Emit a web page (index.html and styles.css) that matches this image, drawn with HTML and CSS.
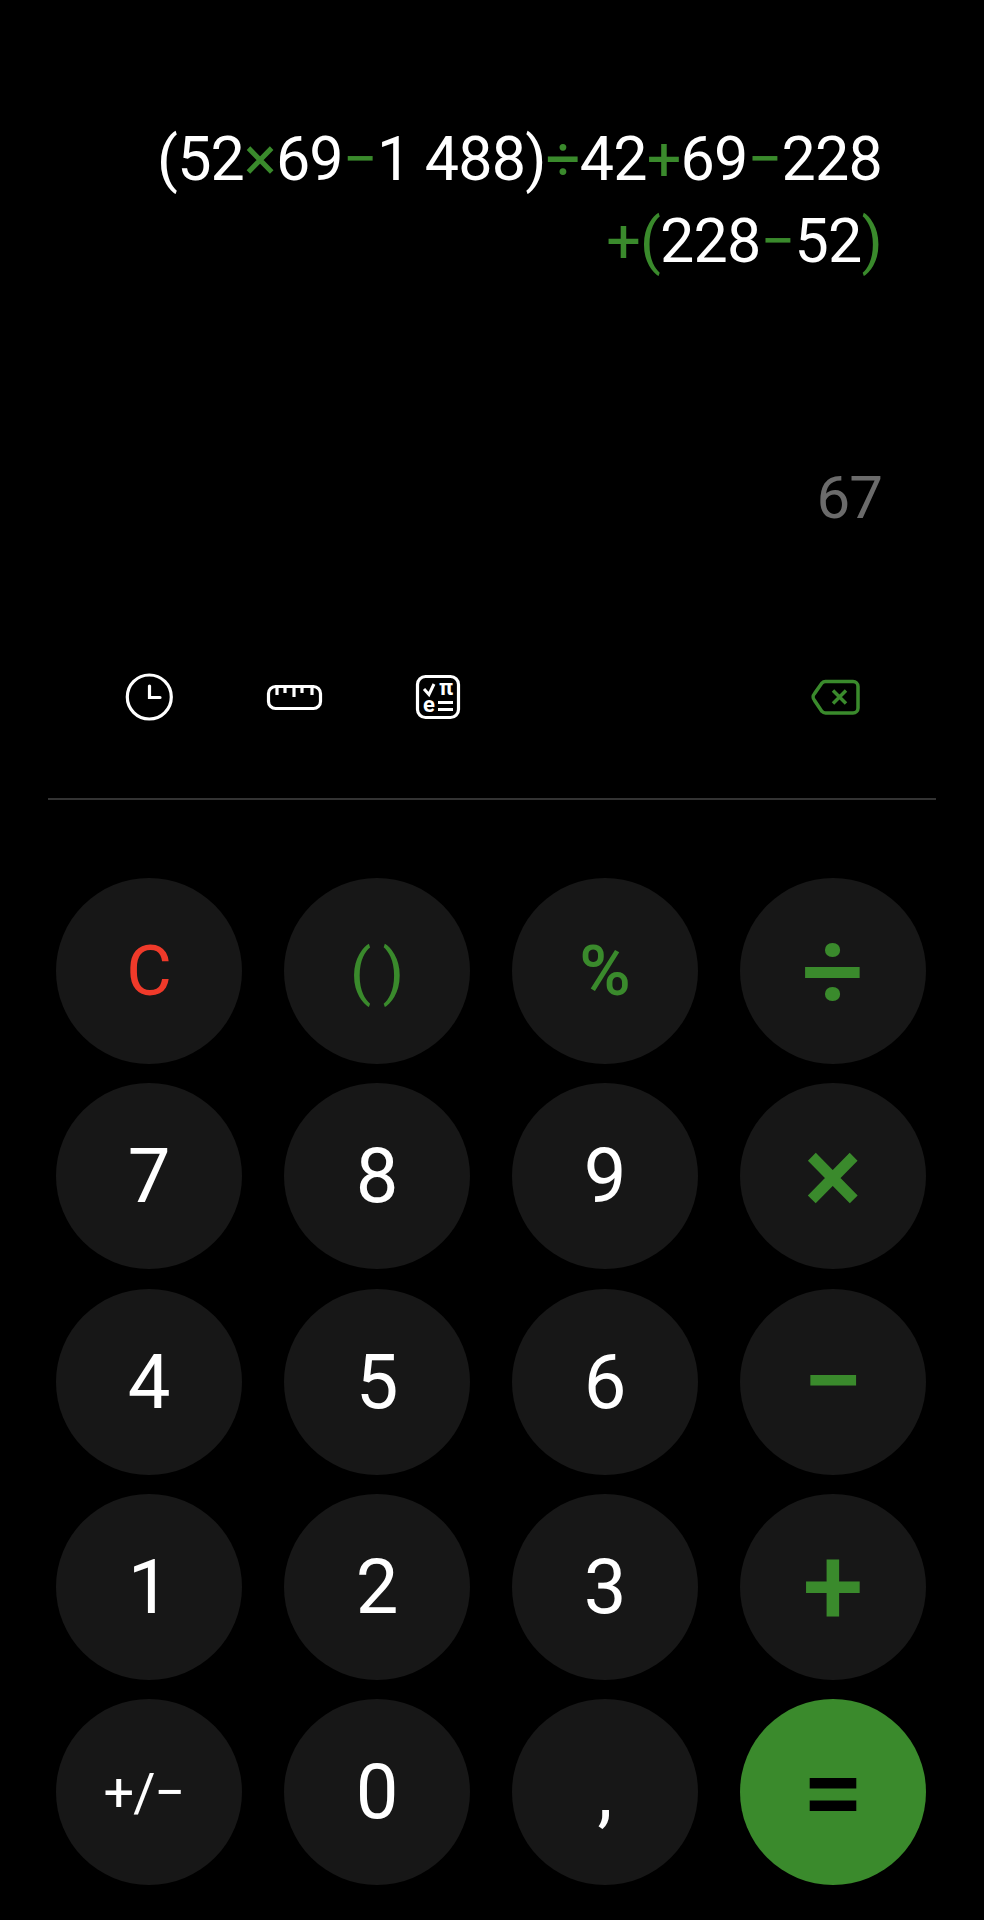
FILE: index.html
```html
<!DOCTYPE html>
<html lang="en">
<head>
    <meta charset="UTF-8">
    <title>Calculator</title>
    <link rel="stylesheet" href="styles.css">
</head>
<body>
    <div id="display">
        <div class="expr"><div>(52<span class="op">×</span>69<span class="op">−</span>1 488)<span class="op">÷</span>42<span class="op">+</span>69<span class="op">−</span>228</div><div><span class="op">+(</span>228<span class="op">−</span>52<span class="op">)</span></div></div>
        <div class="result">67</div>
    </div>

    <div id="tools">
        <svg class="tool" viewBox="0 0 60 60" fill="none" stroke="#fff" stroke-width="3.2">
            <circle cx="30.3" cy="30" r="22"/>
            <path d="M30.5 19V30.5H41" stroke-linecap="round"/>
        </svg>
        <svg class="tool" viewBox="0 0 60 60" fill="none" stroke="#fff" stroke-width="3.2">
            <rect x="4.5" y="19.5" width="52" height="22" rx="7"/>
            <path d="M13 20V28M21 20V26M30 20V30M38 20V26M48 20V28"/>
        </svg>
        <svg class="tool" viewBox="0 0 60 60" fill="none" stroke="#fff" stroke-width="3.2">
            <rect x="8.5" y="9.5" width="41" height="41" rx="8"/>
            <path d="M15 22L20 27.5L25 17" stroke-width="3"/>
            <text class="sym" x="37" y="28">π</text>
            <text class="sym" x="20" y="45">e</text>
            <path d="M29 35.5H44M29 42.5H44" stroke-width="2.8"/>
        </svg>
        <svg class="tool del" viewBox="0 0 60 60" fill="none" stroke="#3a8a2c" stroke-width="3.5">
            <path d="M20.5 14.5H48a5 5 0 0 1 5 5V41a5 5 0 0 1-5 5H20.5a5 5 0 0 1-3.6-1.6L9.5 33.4a5 5 0 0 1 0-6.8L16.9 16.1a5 5 0 0 1 3.6-1.6Z"/>
            <path d="M28 23.5L41 36.5M41 23.5L28 36.5"/>
        </svg>
    </div>

    <div id="line"></div>

    <div id="keys">
        <div class="key red">C</div>
        <div class="key green paren">( )</div>
        <div class="key green pct">%</div>
        <div class="key green sign">÷</div>
        <div class="key">7</div>
        <div class="key">8</div>
        <div class="key">9</div>
        <div class="key green sign">×</div>
        <div class="key">4</div>
        <div class="key">5</div>
        <div class="key">6</div>
        <div class="key green sign">−</div>
        <div class="key">1</div>
        <div class="key">2</div>
        <div class="key">3</div>
        <div class="key green sign">+</div>
        <div class="key small">+/−</div>
        <div class="key">0</div>
        <div class="key">,</div>
        <div class="key equal sign">=</div>
    </div>
</body>
</html>
```

FILE: styles.css
```css
*{
    margin: 0;
    padding: 0;
    box-sizing: border-box;
}
body{
    width: 984px;
    height: 1920px;
    background: #000;
    color: #fff;
    font-family: Roboto, "Liberation Sans", sans-serif;
    overflow: hidden;
}
#display{
    padding: 118px 102px 0 0;
    text-align: right;
    font-size: 61px;
    line-height: 82px;
    height: 539px;
}
.expr{
    letter-spacing: -0.8px;
    height: 339px;
}
.op{
    color: #3a8a2c;
}
.result{
    color: #6b6b6b;
    font-size: 60px;
    letter-spacing: -1px;
}
#tools{
    display: flex;
    gap: 85px;
    padding: 0 119px;
    margin-top: 128px;
}
.tool{
    width: 60px;
    height: 60px;
}
.tool.del{
    margin-left: auto;
}
.sym{
    fill: #fff;
    stroke: none;
    font-size: 22px;
    font-weight: 700;
    text-anchor: middle;
}
#line{
    height: 2px;
    margin: 71px 48px 0;
    background: #333;
}
#keys{
    display: grid;
    grid-template-columns: repeat(4, 186px);
    grid-auto-rows: 186px;
    gap: 19.25px 42px;
    padding-left: 56px;
    margin-top: 78px;
}
.key{
    display: flex;
    align-items: center;
    justify-content: center;
    border-radius: 50%;
    background: #171717;
    font-size: 76px;
}
.red{
    color: #f03a2a;
    font-size: 70px;
}
.green{
    color: #3a8a2c;
}
.paren{
    font-size: 62px;
    word-spacing: -4px;
}
.pct{
    font-size: 70px;
    font-weight: 500;
}
.sign{
    font-size: 110px;
    font-weight: 500;
}
.small{
    font-size: 54px;
    letter-spacing: -1px;
    padding-right: 10px;
}
.equal{
    background: #3a8a2c;
    color: #000;
}
```
